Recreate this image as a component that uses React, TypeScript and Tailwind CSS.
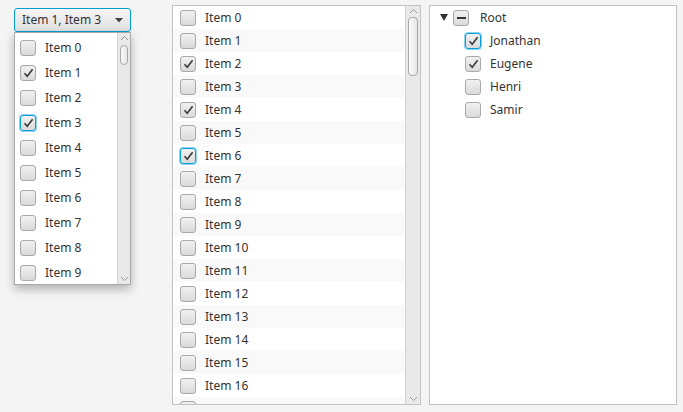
import React from "react";

const FONT = { fontFamily: '"Noto Sans", "Open Sans", sans-serif' };

function CheckBox({
  checked = false,
  focused = false,
  mixed = false,
}: {
  checked?: boolean;
  focused?: boolean;
  mixed?: boolean;
}) {
  return (
    <span
      className={
        "flex h-[16px] w-[16px] shrink-0 items-center justify-center rounded-[3px] border bg-gradient-to-b from-[#f1f1f1] to-[#dadada] " +
        (focused
          ? "border-[#039ed3] shadow-[0_0_0_1px_#8fd3f0]"
          : "border-[#a9a9a9]")
      }
    >
      {checked && (
        <svg width="11" height="10" viewBox="0 0 11 10">
          <path d="M1.5 5.2 L4.2 8.2 L9.6 1.2" fill="none" stroke="#3a3a3a" strokeWidth="1.6" />
        </svg>
      )}
      {mixed && <span className="h-[2px] w-[9px] bg-[#333]" />}
    </span>
  );
}

function Chevron({ up }: { up: boolean }) {
  return (
    <svg width="9" height="6" viewBox="0 0 9 6">
      <path
        d={up ? "M1 5 L4.5 1.5 L8 5" : "M1 1 L4.5 4.5 L8 1"}
        fill="none"
        stroke="#9a9a9a"
        strokeWidth="1"
      />
    </svg>
  );
}

function ScrollBar({ thumbTop, thumbHeight, width }: { thumbTop: number; thumbHeight: number; width: string }) {
  return (
    <div className={`relative flex ${width} flex-col items-center justify-between border-l border-[#d4d4d4] bg-[#e9e9e9] py-[2px]`}>
      <Chevron up />
      <Chevron up={false} />
      <div
        className="absolute left-[2px] right-[2px] rounded-[4px] border border-[#a8a8a8] bg-gradient-to-r from-[#fafafa] to-[#e6e6e6]"
        style={{ top: thumbTop, height: thumbHeight }}
      />
    </div>
  );
}

const LIST_CHECKED = new Set([2, 4, 6]);

export default function App() {
  return (
    <div className="flex h-[412px] w-[683px] items-start bg-[#f4f4f4] text-[12px] text-[#333]" style={FONT}>
      {/* Check combo box with open popup */}
      <div className="relative ml-[14px] mt-[8px] w-[117px]">
        <div className="flex h-[24px] items-center justify-between rounded-[3px] border border-[#039ed3] bg-gradient-to-b from-[#f6f6f6] to-[#dfdfdf] pl-[7px] pr-[7px]">
          <span>Item 1, Item 3</span>
          <svg width="8" height="5" viewBox="0 0 8 5">
            <path d="M0 0 H8 L4 4.5 Z" fill="#444" />
          </svg>
        </div>
        <div className="absolute left-0 top-[24px] z-10 flex h-[253px] w-[117px] border border-[#a9a9a9] bg-white shadow-[0_4px_9px_rgba(0,0,0,0.28)]">
          <div className="flex flex-1 flex-col pt-[2px]">
            {Array.from({ length: 10 }, (_, i) => (
              <div key={i} className="flex h-[25px] shrink-0 items-center pl-[5px]">
                <CheckBox checked={i === 1 || i === 3} focused={i === 3} />
                <span className="ml-[9px] leading-none">Item {i}</span>
              </div>
            ))}
          </div>
          <ScrollBar thumbTop={12} thumbHeight={20} width="w-[13px]" />
        </div>
      </div>

      {/* Check list view */}
      <div className="ml-[41px] mt-[5px] flex h-[400px] w-[249px] border border-[#c2c2c2] bg-white">
        <div className="flex flex-1 flex-col overflow-hidden">
          {Array.from({ length: 18 }, (_, i) => (
            <div
              key={i}
              className={
                "flex h-[23px] shrink-0 items-center pl-[7px] " + (i % 2 === 1 ? "bg-[#f9f9f9]" : "bg-white")
              }
            >
              <CheckBox checked={LIST_CHECKED.has(i)} focused={i === 6} />
              {i < 17 && <span className="ml-[9px] leading-none">Item {i}</span>}
            </div>
          ))}
        </div>
        <ScrollBar thumbTop={11} thumbHeight={59} width="w-[15px]" />
      </div>

      {/* Check tree view */}
      <div className="ml-[8px] mt-[5px] flex h-[400px] w-[248px] flex-col border border-[#c2c2c2] bg-white">
        <div className="flex h-[23px] items-center pl-[10px]">
          <svg width="8" height="7" viewBox="0 0 8 7">
            <path d="M0 0 H8 L4 7 Z" fill="#333" />
          </svg>
          <span className="ml-[5px]">
            <CheckBox mixed />
          </span>
          <span className="ml-[11px] leading-none">Root</span>
        </div>
        {[
          { name: "Jonathan", checked: true, focused: true },
          { name: "Eugene", checked: true, focused: false },
          { name: "Henri", checked: false, focused: false },
          { name: "Samir", checked: false, focused: false },
        ].map((c) => (
          <div key={c.name} className="flex h-[23px] items-center pl-[35px]">
            <CheckBox checked={c.checked} focused={c.focused} />
            <span className="ml-[9px] leading-none">{c.name}</span>
          </div>
        ))}
      </div>
    </div>
  );
}
